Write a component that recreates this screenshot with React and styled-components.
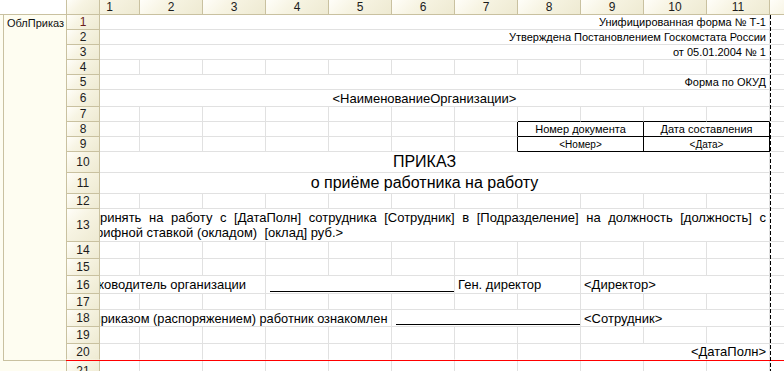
import React from 'react';
import styled, { createGlobalStyle } from 'styled-components';

const GRID = '#e1e1e1';
const TAN = '#c9c1a0';
const CREAM = '#fefdf1';

const GlobalStyle = createGlobalStyle`
  * { box-sizing: border-box; }
  html, body { margin: 0; padding: 0; background: #fff; }
  body {
    font-family: "Liberation Sans", Arial, sans-serif;
    color: #000;
  }
`;

const Sheet = styled.div`
  width: 784px;
  height: 371px;
  overflow: hidden;
  background: #fff;
`;

const HeaderBar = styled.div`
  display: flex;
  height: 15px;
`;

const TopBlank = styled.div`
  width: 66px;
  flex: none;
  border-bottom: 1px solid ${TAN};
`;

const HeadCell = styled.div`
  display: flex;
  align-items: center;
  justify-content: center;
  background: linear-gradient(135deg, #fffef9 0%, #f7f4e3 40%, #eeead2 100%);
  border-right: 1px solid ${TAN};
  border-bottom: 1px solid ${p => (p.$last ? 'transparent' : TAN)};
  font-size: 12px;
  line-height: 1;
  color: ${p => p.$color || '#1c1c1c'};
  overflow: hidden;
`;

const CornerCell = styled(HeadCell)`
  width: 34px;
  flex: none;
  border-left: 1px solid ${TAN};
`;

const RowHead = styled(HeadCell)`
  width: 34px;
  flex: none;
  border-left: 1px solid ${TAN};
`;

const Viewport = styled.div`
  flex: 1;
  overflow: hidden;
  background: #fff;
`;

// лист прокручен вправо: первая колонка видна не целиком
const Track = styled.div`
  display: grid;
  grid-template-columns: 60px repeat(11, 63px) 63px;
  grid-template-rows: 100%;
  margin-left: -20px;
  height: 100%;
`;

const Body = styled.div`
  position: relative;
  background: ${CREAM};
`;

const Area = styled.div`
  display: flex;
`;

const GroupPanel = styled.div`
  width: 63px;
  margin-left: 3px;
  flex: none;
  border-left: 1px solid ${TAN};
  border-bottom: 1px solid ${TAN};
  padding: 1px 0 0 3px;
  font-size: 11px;
  line-height: 14px;
  color: #111;
  white-space: nowrap;
  overflow: hidden;
`;

const AreaRows = styled.div`
  flex: 1;
  border-bottom: 1px solid #ff0000;
`;

const SheetRow = styled.div`
  display: flex;
  height: ${p => p.$h}px;
`;

const Spacer = styled.div`
  width: 66px;
  flex: none;
`;

const Cell = styled.div`
  grid-column: span ${p => p.$span || 1};
  display: flex;
  align-items: center;
  justify-content: ${p => (p.$align === 'right' ? 'flex-end' : p.$align === 'center' ? 'center' : 'flex-start')};
  padding: ${p => (p.$line ? '0 0 0 4px' : `0 3px 0 ${p.$indent ?? 3}px`)};
  border-right: 1px solid ${p => p.$edge || GRID};
  border-bottom: 1px solid ${p => (p.$last ? 'transparent' : p.$under || GRID)};
  font-size: ${p => p.$size || 13}px;
  white-space: nowrap;
  overflow: hidden;
`;

const Para = styled.p`
  margin: 0;
  width: 100%;
  white-space: normal;
  text-align: justify;
  line-height: 15px;
`;

const SignLine = styled.div`
  flex: 1;
  align-self: flex-end;
  margin-bottom: 1px;
  border-bottom: 1px solid #000;
`;

const PageBreak = styled.div`
  position: absolute;
  left: 770px;
  top: 0;
  bottom: 0;
  width: 1px;
  background: repeating-linear-gradient(to bottom, #000 0 4px, transparent 4px 6px);
`;

const blanks = (n, key) =>
  Array.from({ length: n }, (_, i) => <Cell key={`${key}-${i}`} />);

const Full = ({ children, align, size, last }) => (
  <>
    <Cell $span={11} $align={align} $size={size} $last={last}>{children}</Cell>
    <Cell $last={last} />
  </>
);

const rows = [
  { h: 15, cells: <Full align="right" size={11}>Унифицированная форма № Т-1</Full> },
  { h: 15, cells: <Full align="right" size={11}>Утверждена Постановлением Госкомстата России</Full> },
  { h: 15, cells: <Full align="right" size={11}>от 05.01.2004 № 1</Full> },
  { h: 15, cells: blanks(12, 'r4') },
  { h: 15, cells: <Full align="right" size={11}>Форма по ОКУД</Full> },
  { h: 17, cells: <Full align="center" size={13}>{'<НаименованиеОрганизации>'}</Full> },
  {
    h: 15,
    cells: (
      <>
        {blanks(7, 'r7')}
        {[0, 1, 2, 3].map(i => <Cell key={i} $under="#000" />)}
        <Cell />
      </>
    ),
  },
  {
    h: 15,
    cells: (
      <>
        {blanks(6, 'r8')}
        <Cell $edge="#000" />
        <Cell $span={2} $align="center" $size={11} $edge="#000" $under="#000">Номер документа</Cell>
        <Cell $span={2} $align="center" $size={11} $edge="#000" $under="#000">Дата составления</Cell>
        <Cell />
      </>
    ),
  },
  {
    h: 15,
    cells: (
      <>
        {blanks(6, 'r9')}
        <Cell $edge="#000" />
        <Cell $span={2} $align="center" $size={10} $edge="#000" $under="#000">{'<Номер>'}</Cell>
        <Cell $span={2} $align="center" $size={10} $edge="#000" $under="#000">{'<Дата>'}</Cell>
        <Cell />
      </>
    ),
  },
  { h: 21, cells: <Full align="center" size={16}>ПРИКАЗ</Full> },
  { h: 21, cells: <Full align="center" size={16}>о приёме работника на работу</Full> },
  { h: 15, cells: blanks(12, 'r12') },
  {
    h: 33,
    cells: (
      <Full>
        <Para>
          {'<Принять на работу с [ДатаПолн] сотрудника [Сотрудник] в [Подразделение] на должность [должность] с тарифной ставкой (окладом) \u00a0[оклад] руб.>'}
        </Para>
      </Full>
    ),
  },
  { h: 17, cells: blanks(12, 'r14') },
  { h: 17, cells: blanks(12, 'r15') },
  {
    h: 18,
    cells: (
      <>
        <Cell $span={3}>Руководитель организации</Cell>
        <Cell $span={3} $line><SignLine /></Cell>
        <Cell $span={2}>Ген. директор</Cell>
        <Cell $span={3}>{'<Директор>'}</Cell>
        <Cell />
      </>
    ),
  },
  { h: 16, cells: blanks(12, 'r17') },
  {
    h: 17,
    cells: (
      <>
        <Cell $span={5} $size={12.8} $indent={1}>С приказом (распоряжением) работник ознакомлен</Cell>
        <Cell $span={3} $line><SignLine /></Cell>
        <Cell $span={3}>{'<Сотрудник>'}</Cell>
        <Cell />
      </>
    ),
  },
  { h: 17, cells: blanks(12, 'r19') },
  {
    h: 16,
    last: true,
    cells: (
      <>
        {Array.from({ length: 8 }, (_, i) => <Cell key={i} $last />)}
        <Cell $span={3} $align="right" $last>{'<ДатаПолн>'}</Cell>
        <Cell $last />
      </>
    ),
  },
];

const columns = Array.from({ length: 12 }, (_, i) => i + 1);

export default function App() {
  return (
    <>
      <GlobalStyle />
      <Sheet>
        <HeaderBar>
          <TopBlank />
          <CornerCell />
          <Viewport>
            <Track>
              {columns.map(n => <HeadCell key={n}>{n}</HeadCell>)}
            </Track>
          </Viewport>
        </HeaderBar>

        <Body>
          <Area>
            <GroupPanel>ОблПриказ</GroupPanel>
            <AreaRows>
              {rows.map((row, i) => (
                <SheetRow key={i} $h={row.h}>
                  <RowHead $last={row.last} $color={i === 0 ? '#6b1d1d' : undefined}>{i + 1}</RowHead>
                  <Viewport>
                    <Track>{row.cells}</Track>
                  </Viewport>
                </SheetRow>
              ))}
            </AreaRows>
          </Area>

          <SheetRow $h={20}>
            <Spacer />
            <RowHead>21</RowHead>
            <Viewport>
              <Track>{blanks(12, 'r21')}</Track>
            </Viewport>
          </SheetRow>

          <PageBreak />
        </Body>
      </Sheet>
    </>
  );
}
